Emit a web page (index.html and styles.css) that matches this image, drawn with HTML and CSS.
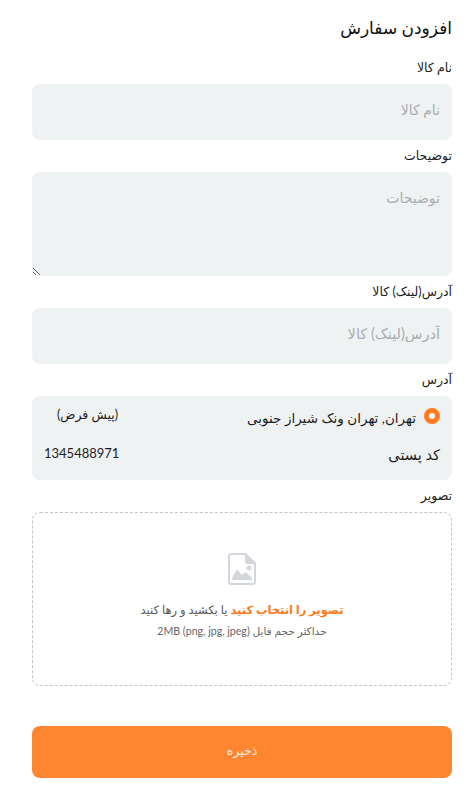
FILE: index.html
```html
<!DOCTYPE html>
<html lang="fa" dir="rtl">
<head>
    <meta charset="UTF-8">
    <meta name="viewport" content="width=device-width, initial-scale=1.0">
    <title>افزودن سفارش</title>
    <link rel="stylesheet" href="styles.css">
</head>
<body>
    <div class="page">
        <h1 class="title">افزودن سفارش</h1>

        <label class="label">نام کالا</label>
        <input class="field" type="text" placeholder="نام کالا">

        <label class="label">توضیحات</label>
        <textarea class="field field-area" placeholder="توضیحات"></textarea>

        <label class="label">آدرس(لینک) کالا</label>
        <input class="field field-link" type="text" placeholder="آدرس(لینک) کالا">

        <label class="label">آدرس</label>
        <div class="address">
            <div class="address-row">
                <div class="address-main">
                    <span class="radio"></span>
                    <span class="address-text">تهران, تهران ونک شیراز جنوبی</span>
                </div>
                <span class="address-default">(پیش فرض)</span>
            </div>
            <div class="address-row address-row-post">
                <span class="post-label">کد پستی</span>
                <span class="post-code">1345488971</span>
            </div>
        </div>

        <label class="label">تصویر</label>
        <div class="dropzone">
            <svg class="drop-icon" width="28" height="32" viewBox="0 0 28 32">
                <path fill="#d3d6dc" fill-rule="evenodd" d="M3 0h15l10 10v19a3 3 0 0 1-3 3H3a3 3 0 0 1-3-3V3a3 3 0 0 1 3-3zm0 2a1 1 0 0 0-1 1v26a1 1 0 0 0 1 1h22a1 1 0 0 0 1-1V11h-6a3 3 0 0 1-3-3V2z"/>
                <circle fill="#d3d6dc" cx="21" cy="15" r="2.500"/>
                <path fill="#d3d6dc" d="M4 27v-2l5-9 5 6 4-3 6 6v2z"/>
            </svg>
            <p class="drop-main"><span class="drop-link">تصویر را انتخاب کنید</span> یا بکشید و رها کنید</p>
            <p class="drop-hint">حداکثر حجم فایل (png, jpg, jpeg) 2MB</p>
        </div>

        <button class="save">ذخیره</button>
    </div>
</body>
</html>
```

FILE: styles.css
```css
* {
    margin: 0;
    padding: 0;
    box-sizing: border-box;
    font-family: 'Lato', 'DejaVu Sans', sans-serif;
}

body {
    background: #fff;
    color: #1c1c1c;
}

.page {
    display: flex;
    flex-direction: column;
    padding: 16px 15px 0 32px;
}

.title {
    font-size: 17px;
    font-weight: 400;
    line-height: 24px;
    margin-bottom: 20px;
    color: #111;
}

.label {
    display: block;
    font-size: 12.500px;
    line-height: 16px;
    height: 16px;
    margin-bottom: 8px;
}

.field {
    display: block;
    width: 100%;
    height: 56px;
    margin-bottom: 8px;
    padding: 0 12px 5px;
    border: none;
    outline: none;
    border-radius: 8px;
    background: #eff2f3;
    font-size: 14px;
    color: #1c1c1c;
}

.field::placeholder {
    color: #a9adb0;
}

.field-area {
    height: 104px;
    padding: 17px 12px;
}

.field-link {
    font-size: 14.500px;
}

.address {
    background: #eff2f3;
    border-radius: 8px;
    height: 84px;
    margin-bottom: 8px;
    padding: 8px 12px;
}

.address-row {
    display: flex;
    justify-content: space-between;
    align-items: center;
    height: 24px;
}

.address-row-post {
    margin-top: 13px;
}

.address-main {
    display: flex;
    align-items: center;
    gap: 8px;
}

.radio {
    width: 16px;
    height: 16px;
    border-radius: 50%;
    border: 5px solid #ff7a1a;
    background: #fff;
}

.address-text {
    font-size: 13.500px;
    padding-top: 3px;
}

.address-default {
    font-size: 12.500px;
    margin-left: 13px;
    padding-bottom: 3px;
}

.post-label {
    font-size: 14.500px;
    padding-top: 3px;
}

.post-code {
    font-size: 13px;
}

.dropzone {
    height: 174px;
    margin-bottom: 40px;
    border: 1px dashed #c4c4c4;
    border-radius: 8px;
    display: flex;
    flex-direction: column;
    align-items: center;
    padding-top: 40px;
}

.drop-icon {
    margin-bottom: 16px;
}

.drop-main {
    font-size: 11.500px;
    line-height: 18px;
    color: #555;
}

.drop-link {
    color: #ff7a1a;
    font-weight: 700;
}

.drop-hint {
    margin-top: 5px;
    font-size: 10.600px;
    line-height: 14px;
    color: #666;
}

.save {
    height: 52px;
    padding-bottom: 4px;
    border: none;
    border-radius: 8px;
    background: #ff8630;
    color: rgba(255, 255, 255, 0.9);
    font-size: 12.500px;
}
```
